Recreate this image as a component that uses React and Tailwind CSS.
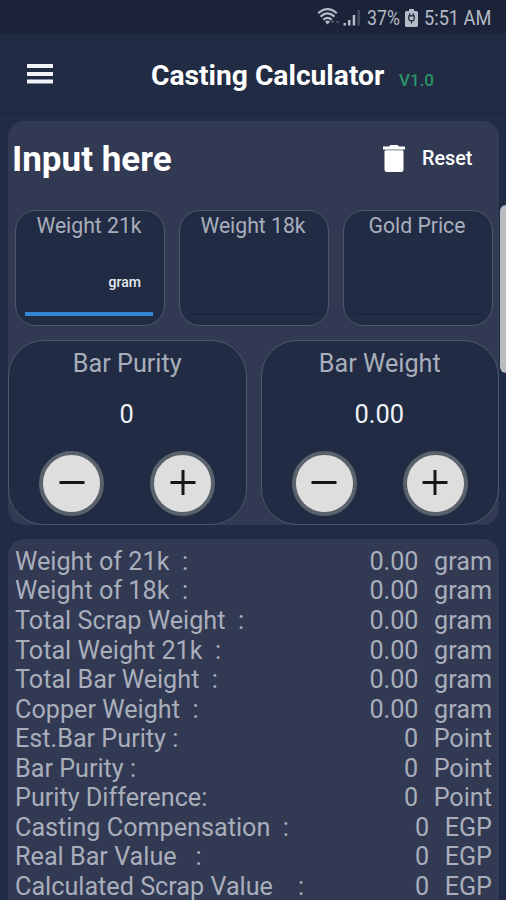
import React from "react";

const results = [
  ["Weight of 21k  :", "0.00", "gram"],
  ["Weight of 18k  :", "0.00", "gram"],
  ["Total Scrap Weight  :", "0.00", "gram"],
  ["Total Weight 21k  :", "0.00", "gram"],
  ["Total Bar Weight  :", "0.00", "gram"],
  ["Copper Weight  :", "0.00", "gram"],
  ["Est.Bar Purity :", "0", "Point"],
  ["Bar Purity :", "0", "Point"],
  ["Purity Difference:", "0", "Point"],
  ["Casting Compensation  :", "0", "EGP"],
  ["Real Bar Value   :", "0", "EGP"],
  ["Calculated Scrap Value    :", "0", "EGP"],
];

function StatusBar() {
  return (
    <div className="flex h-[34px] items-center bg-[#1a2337] pt-px pl-[317px] text-[#b5bac6]">
      <svg className="h-[20px] w-[24px] shrink-0" viewBox="0 0 24 20" fill="none" stroke="currentColor">
        <path d="M1.2 5.200Q10.500-3 19.800 5.200M3.500 8.600Q10.500 2.300 17.500 8.600M6.300 11.700Q10.500 8 14.700 11.700" strokeWidth="2.100" />
        <path d="M8 13.500Q10.500 11.600 13 13.500L10.500 16.400Z" fill="currentColor" stroke="none" />
        <path d="M13.500 14.500l2-2.800 2 2.800zM19 13l1.800 2.800 1.800-2.800z" fill="currentColor" stroke="none" opacity=".4" />
      </svg>
      <svg className="ml-[2px] h-[18px] w-[18px] shrink-0" viewBox="0 0 18 18" fill="currentColor">
        <path d="M.5 14h2.500v2.500H.5zM5 11h2.500v5.500H5zM9.700 6h2.500v10.500H9.700z" />
        <path d="M14.500 1H17v15.500h-2.500z" opacity=".28" />
      </svg>
      <span className="ml-[6px] w-[34px] whitespace-nowrap text-[20px] leading-[34px]">
        <span className="inline-block origin-left scale-x-[0.885]">37%</span>
      </span>
      <svg className="ml-[4px] h-[18px] w-[13px] shrink-0" viewBox="0 0 13 18">
        <path d="M4 0h5v2h2.500q1.500 0 1.500 1.500v13q0 1.500-1.500 1.500h-10Q0 18 0 16.500v-13Q0 2 1.500 2H4z" fill="#b5bac6" />
        <path d="M3.800 6.800h5.400v3.200q0 1.800-2.700 1.800T3.800 10zM6.500 12v2.500M4.800 4.300V7M8.200 4.300V7" fill="none" stroke="#1a2337" strokeWidth="1.200" />
      </svg>
      <span className="ml-[6px] whitespace-nowrap text-[20px] leading-[34px]">
        <span className="inline-block origin-left scale-x-[0.91]">5:51 AM</span>
      </span>
    </div>
  );
}

function InputCard({ label, active }) {
  return (
    <div className="flex h-[116px] w-[150px] flex-col items-center rounded-[21px] border border-[#4d586a] bg-[#212c44] text-[#a9aebb]">
      <div className="mt-[2px] whitespace-nowrap pr-[2px] text-[21.200px] leading-[25px]">{label}</div>
      <div className="mt-[34px] h-[20px] w-full pr-[23px] text-right text-[14px] leading-[20px] font-medium text-[#e6e9ef]">
        {active ? "gram" : ""}
      </div>
      {active ? (
        <div className="mt-[20px] mr-[2px] h-[4px] w-[128px] bg-[#3584d2]" />
      ) : (
        <div className="mt-[21px] h-[2px] w-[128px] bg-[#1b253b]" />
      )}
    </div>
  );
}

function RoundButton({ plus }) {
  return (
    <button className="flex size-[65px] items-center justify-center rounded-full border-[4px] border-[#59616b] bg-[#dedede]">
      <svg className="size-[26px]" viewBox="0 0 26 26" stroke="#161616" strokeWidth="3">
        <path d="M.5 12.500h25" />
        {plus && <path d="M13 0v25" />}
      </svg>
    </button>
  );
}

function Stepper({ label, value }) {
  return (
    <div className="flex h-[185px] w-[239px] flex-col items-center rounded-[36px] border border-[#4d586a] bg-[#212c44]">
      <div className="mt-[8px] whitespace-nowrap text-[25.200px] leading-[30px] text-[#a9aebb]">{label}</div>
      <div className="mt-[20px] mr-px text-[25.400px] leading-[30px] text-[#eff2f7]">{value}</div>
      <div className="mt-[22px] flex w-full gap-[46px] pl-[30px]">
        <RoundButton />
        <RoundButton plus />
      </div>
    </div>
  );
}

export default function App() {
  return (
    <div className="flex h-[900px] w-[506px] flex-col overflow-hidden bg-[#202b46] font-['Roboto',sans-serif]">
      <StatusBar />
      <header className="flex h-[80px] shrink-0 items-center border-b-2 border-[#1e2940] bg-[#212c44] pt-[2px]">
        <svg className="ml-[26px] h-[20px] w-[27px] shrink-0" viewBox="0 0 27 20" fill="#f1f2f5">
          <path d="M1 0h26v4H1zM1 8h26v4H1zM1 15.500h26v4H1z" />
        </svg>
        <h1 className="mt-[3px] ml-[98px] w-[248px] whitespace-nowrap text-[28.200px] leading-[32px] font-bold text-white">
          Casting Calculator
        </h1>
        <span className="mt-[11px] text-[17px] leading-[20px] font-medium text-[#2a9268]">V1.0</span>
      </header>
      <main className="flex h-[786px]">
        <div className="flex w-[500px] flex-col pt-[7px] pl-[8px]">
          <section className="h-[404px] w-[491px] shrink-0 rounded-[16px] bg-[#323953]">
            <div className="flex h-[74px] items-center pl-[4px]">
              <h2 className="mt-[3px] w-[371px] whitespace-nowrap text-[35px] leading-[40px] font-bold text-white">Input here</h2>
              <svg className="mt-px h-[28px] w-[22px] shrink-0" viewBox="0 0 22 28" fill="white">
                <path d="M6 1.500L7.500 0h7L16 1.500h6v3H0v-3zM1.500 6h19v18.500q0 2.500-2.500 2.500H4q-2.500 0-2.500-2.500z" />
                <path d="M2 4.500h18V6H2z" fill="#c9ccd5" />
              </svg>
              <span className="mt-[2px] ml-[17px] text-[19.800px] leading-[24px] font-medium text-white">Reset</span>
            </div>
            <div className="mt-[14.500px] flex gap-[14px] pl-[7px]">
              <InputCard label="Weight 21k" active />
              <InputCard label="Weight 18k" />
              <InputCard label="Gold Price" />
            </div>
            <div className="mt-[14px] flex gap-[14px]">
              <Stepper label="Bar Purity" value="0" />
              <Stepper label="Bar Weight" value="0.00" />
            </div>
          </section>
          <section className="mt-[14px] h-[400px] w-[491px] shrink-0 rounded-t-[16px] bg-[#323953] pt-[8px] pl-[7px] pr-[7px]">
            {results.map(([label, value, unit]) => (
              <div key={label} className="flex h-[29.550px] items-center whitespace-pre text-[25.200px] text-[#a9aebb]">
                <span className="flex-1">{label}</span>
                <span>{value}</span>
                <span className="ml-[15.500px]">{unit}</span>
              </div>
            ))}
          </section>
        </div>
        <div className="mt-[91px] h-[168px] w-[6px] rounded-l-[6px] bg-[#b9bbc0]" />
      </main>
    </div>
  );
}
